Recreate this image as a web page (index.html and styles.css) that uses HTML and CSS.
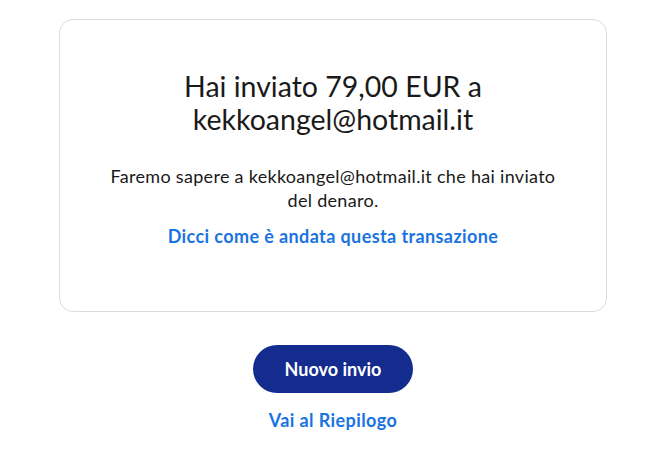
FILE: index.html
```html
<!DOCTYPE html>
<html lang="it">
<head>
<meta charset="utf-8">
<link rel="stylesheet" href="styles.css">
</head>
<body>
<main class="page">
  <section class="card">
    <h1 class="title">Hai inviato 79,00 EUR a<br>kekkoangel@hotmail.it</h1>
    <p class="text">Faremo sapere a kekkoangel@hotmail.it che hai inviato<br>del denaro.</p>
    <a class="link" href="#">Dicci come è andata questa transazione</a>
  </section>
  <div class="actions">
    <button class="btn" type="button">Nuovo invio</button>
    <a class="link" href="#">Vai al Riepilogo</a>
  </div>
</main>
</body>
</html>
```
FILE: styles.css
```css
html, body {
  margin: 0;
  padding: 0;
  background: #ffffff;
}
body {
  font-family: Lato, "Noto Sans", "Liberation Sans", sans-serif;
  color: #1a1a1a;
}
.page {
  width: 548px;
  margin: 0 0 0 59px;
  padding-top: 19px;
  display: flex;
  flex-direction: column;
  align-items: center;
}
.card {
  box-sizing: border-box;
  width: 548px;
  height: 293px;
  border: 1px solid #dcdcdc;
  border-radius: 14px;
  display: flex;
  flex-direction: column;
  align-items: center;
  text-align: center;
  padding-top: 50px;
}
.title {
  margin: 0;
  font-size: 28.5px;
  font-weight: 400;
  line-height: 33px;
  color: #1a1a1a;
}
.text {
  margin: 28px 0 0;
  font-size: 18px;
  letter-spacing: 0.3px;
  line-height: 24px;
  color: #1a1a1a;
}
.link {
  display: block;
  margin-top: 12px;
  font-size: 18px;
  letter-spacing: 0.4px;
  font-weight: 700;
  line-height: 24px;
  color: #1a73e0;
  text-decoration: none;
}
.actions {
  display: flex;
  flex-direction: column;
  align-items: center;
  margin-top: 33px;
}
.btn {
  width: 160px;
  height: 48px;
  border: none;
  border-radius: 24px;
  background: #142c8e;
  color: #ffffff;
  font-family: inherit;
  font-size: 18px;
  font-weight: 700;
  cursor: pointer;
}
.actions .link {
  margin-top: 15px;
}
```
